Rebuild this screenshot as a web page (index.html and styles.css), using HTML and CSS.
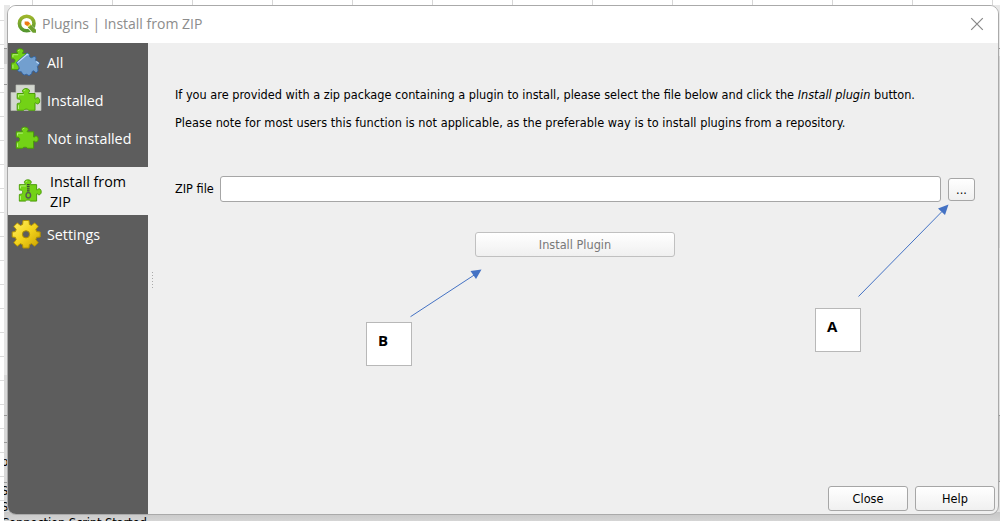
FILE: index.html
```html
<!DOCTYPE html>
<html lang="en">
<head>
<meta charset="utf-8">
<title>Plugins | Install from ZIP</title>
<link rel="stylesheet" href="styles.css">
</head>
<body>
<svg class="defs" width="0" height="0">
  <defs>
    <linearGradient id="gold" x1="0" y1="0" x2="1" y2="1"><stop offset="0" stop-color="#fff06a"/><stop offset=".5" stop-color="#f3d31c"/><stop offset="1" stop-color="#c9a000"/></linearGradient>
    <linearGradient id="leaf" x1="0" y1="0" x2="0" y2="1"><stop offset="0" stop-color="#9db52c"/><stop offset="1" stop-color="#55972f"/></linearGradient>
    <symbol id="piece" viewBox="0 0 24 24">
      <path d="M.7 5.5H6.9C7.6 4.8 6 4.3 6 3.1 6 1.5 7.5.6 9.5.6S13 1.5 13 3.1C13 4.3 11.4 4.8 12.1 5.5H18.5V10.8C19.3 11.3 19.7 9.7 21 9.7 22.4 9.7 23.2 11.2 23.2 12.8S22.4 15.9 21 15.9C19.7 15.9 19.3 14.3 18.5 14.9V22.3H12.3C11.6 21.8 11.6 21.2 9.7 21.2S7.8 21.8 7.1 22.3H.7V15.8C1.5 15 2 15.4 2.7 15.3 3.8 15.1 4.2 14.2 4.2 13.2S3.8 11.3 2.7 11.1C2 11 1.5 11.4.7 10.6Z"/>
      <path d="M2 9.3V6.8H7.5M7.3 3Q7.8 1.9 9 1.8M2 17.2V21" fill="none" stroke="#b4f57c" stroke-width="1"/>
    </symbol>
  </defs>
</svg>
<div class="desktop">
  <div class="behind-left"></div>
  <div class="behind-right"></div>
  <div class="behind-bottom"></div>
  <i class="tick t1"></i><i class="tick t2"></i><i class="tick t3"></i>
  <i class="rule r1"></i><i class="rule r2"></i><i class="rule r4"></i><i class="rule r5"></i><i class="rule r6"></i>
  <div class="console"><span class="log l1">p</span><span class="log l2">S</span><span class="log l3">S</span><span class="log l4">Connection Script Started</span></div>
</div>
<div class="window">
  <header class="titlebar">
    <svg class="logo" viewBox="0 0 20 20">
      <circle cx="9.7" cy="9.5" r="7.3" fill="none" stroke="url(#leaf)" stroke-width="3.6"/>
      <path d="M9 9.2 12.5 9 19.8 16.2V19.6H15.4L9 12.6Z" fill="#fff"/>
      <path d="M11 10.6H13.8L19 15.8V18.7H15.8L11 13.6Z" fill="#6da02e"/>
      <path d="M7.6 7.4H11.2L13.2 9.4 10.4 12.2 7.6 10.2Z" fill="#ee7913"/>
      <path d="M10.3 12.1 13.2 9.4 14.4 10.6 11.4 13.3Z" fill="#f3e058"/>
    </svg>
    <h1 class="title">Plugins | Install from ZIP</h1>
    <svg class="close-icon" viewBox="0 0 14 14"><path d="M1.2 1.2 12.8 12.8M12.8 1.2 1.2 12.8" stroke="#888" stroke-width="1.2"/></svg>
  </header>
  <div class="body">
    <nav class="sidebar">
      <div class="item">
        <svg class="icon" viewBox="0 0 36 38">
          <use href="#piece" x="3" y="4.7" width="23" height="24" class="green"/>
          <path d="M8.3 19.7 19.1 10.1 21.6 11.7C21.4 13.4 21.9 14.7 23.3 14.7S25.5 13 27 13.6 28 16.1 27.5 17.2L31.9 20.3 29.4 23.4 29.8 25.7 30 28.2 28 29.8 25.6 27.8 24.2 28.5 23.7 30.8 21 32.7 18.5 31.3 16.5 32 14.3 30.8C14.4 28.6 12.3 28.3 11 29L9.8 27.6 11.3 25.4 10.7 23.3Z" fill="#729fcf" stroke="#3465a4"/>
          <path d="M9.5 19.6 19.2 11.3 20.4 12M28.3 18.5 30.8 20.4" fill="none" stroke="#c7e0fb" stroke-width="1.2"/>
        </svg>
        <span class="label">All</span>
      </div>
      <div class="item">
        <svg class="icon" viewBox="0 0 36 38">
          <path d="M8 4H26.5V11.5H33V29.5H3V11.5H8Z" fill="#d3d7cf" stroke="#b9bcb5" stroke-width=".7"/>
          <use href="#piece" x="8" y="7" width="25" height="24" class="green"/>
        </svg>
        <span class="label">Installed</span>
      </div>
      <div class="item">
        <svg class="icon" viewBox="0 0 36 38"><use href="#piece" x="7.5" y="7.2" width="23.5" height="24" class="green"/></svg>
        <span class="label">Not installed</span>
      </div>
      <div class="item selected">
        <svg class="icon" viewBox="0 0 36 48">
          <use href="#piece" x="10.5" y="12" width="23.5" height="24" class="green"/>
          <path d="M20.3 17V26" stroke="#3f453b" stroke-width="2.6" stroke-dasharray="1.2 .9"/>
          <ellipse cx="20.3" cy="28.3" rx="2.3" ry="2.7" fill="none" stroke="#555b50" stroke-width="1.4"/>
        </svg>
        <span class="label">Install from<br>ZIP</span>
      </div>
      <div class="item">
        <svg class="icon" viewBox="0 0 36 38">
          <path fill-rule="evenodd" d="M15 5.5H21L21.4 9.5 23.6 10.4 26.7 7.9 30.2 11.4 27.8 14.5 28.6 16.6 32.2 17V22L28.6 22.4 27.8 24.6 30.2 27.7 26.7 31.2 23.6 28.7 21.4 29.7 21 33H15L14.6 29.7 12.4 28.7 9.3 31.2 5.8 27.7 8.2 24.6 7.4 22.4 4.2 22V17L7.4 16.6 8.2 14.5 5.8 11.4 9.3 7.9 12.4 10.4 14.6 9.5ZM18 15.7A3.6 3.6 0 1 0 18 22.9 3.6 3.6 0 1 0 18 15.7Z" fill="url(#gold)" stroke="#b39200" stroke-width="1" stroke-linejoin="round"/>
        </svg>
        <span class="label">Settings</span>
      </div>
    </nav>
    <div class="splitter"></div>
    <main class="content">
      <p class="text first">If you are provided with a zip package containing a plugin to install, please select the file below and click the <em>Install plugin</em> button.</p>
      <p class="text second">Please note for most users this function is not applicable, as the preferable way is to install plugins from a repository.</p>
      <div class="file-row">
        <label class="text file-label" for="zip">ZIP file</label>
        <input id="zip" class="field" type="text">
        <button class="button browse">...</button>
      </div>
      <button class="button install" disabled>Install Plugin</button>
      <footer class="actions">
        <button class="button">Close</button>
        <button class="button">Help</button>
      </footer>
    </main>
  </div>
</div>
<svg class="arrows" viewBox="0 0 1000 521">
  <g stroke="#4472c4" stroke-width="1" fill="#4472c4">
    <path d="M410.5 316.7 475 274.5M858.5 296.5 942 211.5" fill="none"/>
    <path stroke="none" d="M481.5 269.5 470.5 271 476 279ZM948.5 204.5 938 208.5 945 215Z"/>
  </g>
</svg>
<div class="callout b">B</div>
<div class="callout a">A</div>
</body>
</html>
```
FILE: styles.css
```css
* { box-sizing: border-box; }
body {
  margin: 0;
  width: 1000px;
  height: 521px;
  overflow: hidden;
  position: relative;
  background: #fff;
  color: #000;
  font: 12.6px "DejaVu Sans Condensed", "DejaVu Sans", sans-serif;
}
.defs { position: absolute; }

/* Sheet and console showing past the window edges */
.desktop { position: absolute; inset: 0; overflow: hidden; background: repeating-linear-gradient(#fff 0 20px, #dcdcdc 20px 21px, #fff 21px 24px); }
.desktop::before { content: ""; position: absolute; left: 0; right: 0; top: 0; height: 5px; background: repeating-linear-gradient(90deg, #fff 0 32px, #d6d6d6 32px 33px, #fff 33px 80px); }
.behind-left { position: absolute; left: 4px; top: 5px; width: 6px; height: 516px; background: linear-gradient(#e8e8e8 0 43px, #cfcfcf 43px 59px, #e6e6e6 59px 370px, #d8d8d8 370px); }
.behind-right { position: absolute; left: 990px; top: 5px; width: 10px; height: 516px; background: linear-gradient(#e8e8e8 0 43px, #e9e9e9 43px 51px, #d4d4d4 51px 243px, #e2e2e2 243px 410px, #cbcbcb 410px 476px, #e0e0e0 476px); }
.behind-bottom { position: absolute; left: 4px; right: 0; top: 512px; height: 9px; background: linear-gradient(#c6c6c6, #d5d5d5); }
.tick, .rule { position: absolute; background: #999; height: 1px; width: 5px; left: 4px; }
.tick { left: 995px; }
.t1 { top: 48px; } .t2 { top: 415px; } .t3 { top: 481px; }
.r1 { top: 48px; } .r2 { top: 84px; } .r4 { top: 415px; } .r5 { top: 442px; } .r6 { top: 482px; }
.console { position: absolute; left: 4px; right: 0; top: 440px; bottom: 0; overflow: hidden; }
.log { position: absolute; font-size: 13px; line-height: 16px; white-space: nowrap; left: -3px; }
.l1 { top: 14px; } .l2 { top: 43px; } .l3 { top: 59px; } .l4 { top: 75px; letter-spacing: -.2px; }

.window {
  position: absolute;
  left: 7px;
  top: 5px;
  width: 992px;
  height: 510px;
  border: 1px solid #aaa;
  border-radius: 9px;
  overflow: hidden;
  display: flex;
  flex-direction: column;
  background: #efefef;
}
.titlebar { flex: none; height: 37px; display: flex; align-items: center; background: #fff; padding: 0 14px 0 9px; }
.logo { width: 20px; height: 20px; margin-top: -1px; }
.title { margin: -2px 0 0 5px; flex: 1; font: 14px "Open Sans", "Noto Sans", sans-serif; color: #8c8c8c; }
.close-icon { width: 14px; height: 14px; margin-top: -1px; }
.body { flex: 1; display: flex; min-height: 0; }
.sidebar { width: 140px; flex: none; background: #5d5d5d; color: #fff; display: flex; flex-direction: column; font: 14.3px/20px "Open Sans", "Noto Sans", sans-serif; }
.item { height: 38px; display: flex; align-items: center; gap: 3px; }
.item .icon { width: 36px; height: 38px; flex: none; }
.item.selected { height: 48px; margin: 10px 0 0; background: #efefef; color: #000; gap: 6px; }
.item.selected .icon { height: 48px; }
.label { white-space: nowrap; padding-top: 1px; }
.green { fill: #73d216; stroke: #4a9b08; stroke-width: 1; }
.splitter { width: 1px; height: 16px; margin: 229px 4px 0; flex: none; background: repeating-linear-gradient(#aaa 0 1px, transparent 1px 3px); }
.content { flex: 1; min-width: 0; display: flex; flex-direction: column; padding: 44px 3px 3px 18px; }
.text { margin: 0; line-height: 16px; white-space: nowrap; }
.second { margin-top: 12px; letter-spacing: .04px; }
.file-row { margin-top: 45px; display: flex; align-items: center; height: 26px; padding-right: 20px; }
.file-label { width: 45px; }
.field { flex: 1; height: 26px; border: 1px solid #a6a6a6; border-radius: 3px; background: #fff; padding: 0 5px; outline: 0; font: inherit; }
.button { width: 80px; height: 25px; padding: 0; border: 1px solid #a6a6a6; border-radius: 3px; background: linear-gradient(#fff, #f0f0f0); font: inherit; color: #000; }
.browse { width: 27px; height: 23px; margin-left: 7px; }
.install { width: 200px; margin: 30px 0 0 300px; border-color: #c0c0c0; color: #787878; }
.actions { margin-top: auto; display: flex; justify-content: flex-end; gap: 7px; }

/* Annotations drawn over the dialog */
.arrows { position: absolute; inset: 0; width: 1000px; height: 521px; pointer-events: none; }
.callout { position: absolute; width: 46px; height: 44px; border: 1px solid #b8b8b8; background: #fff; padding: 8px 0 0 11px; font: bold 15px/18px "Open Sans", "Noto Sans", sans-serif; }
.a { left: 815px; top: 308px; }
.b { left: 366px; top: 322px; }
```
